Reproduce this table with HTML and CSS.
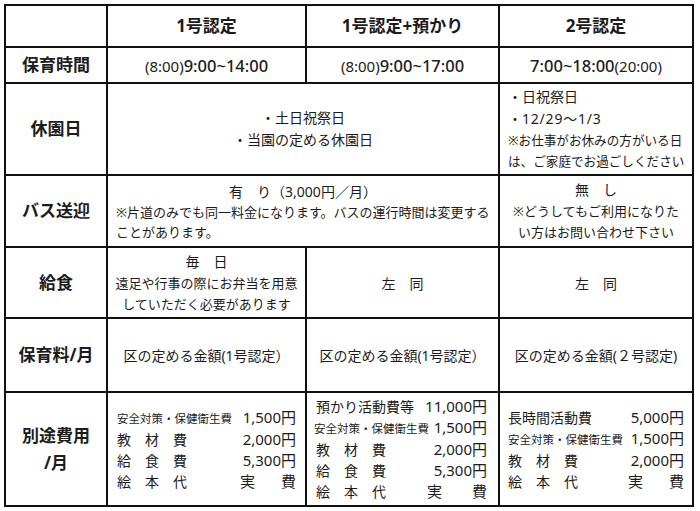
FILE: index.html
```html
<!DOCTYPE html>
<html lang="ja">
<head>
<meta charset="utf-8">
<title>保育料一覧</title>
<link rel="stylesheet" href="styles.css">
</head>
<body>
<table class="fee-table">
  <colgroup>
    <col class="c-label">
    <col class="c-1">
    <col class="c-2">
    <col class="c-3">
  </colgroup>
  <tr class="r-head">
    <td></td>
    <th>1号認定</th>
    <th>1号認定+預かり</th>
    <th>2号認定</th>
  </tr>
  <tr class="r-time">
    <th class="label">保育時間</th>
    <td><span class="t-small">(8:00)</span><span class="t-big">9:00~14:00</span></td>
    <td><span class="t-small">(8:00)</span><span class="t-big">9:00~17:00</span></td>
    <td><span class="t-big">7:00~18:00</span><span class="t-small">(20:00)</span></td>
  </tr>
  <tr class="r-holiday">
    <th class="label">休園日</th>
    <td colspan="2" class="body main lh22">・土日祝祭日<br>・当園の定める休園日</td>
    <td class="body left lh21"><span class="main">・日祝祭日<br>・<span class="date">12/29〜1/3</span></span><br><span class="note-sm">※お仕事がお休みの方がいる日<br>は、ご家庭でお過ごしください</span></td>
  </tr>
  <tr class="r-bus">
    <th class="label">バス送迎</th>
    <td colspan="2" class="body lh21">
      <div class="bus-main main">有　り（3,000円／月）</div>
      <div class="bus-note">※片道のみでも同一料金になります。バスの運行時間は変更する<br>ことがあります。</div>
    </td>
    <td class="body lh21"><span class="main">無　し</span><br>※どうしてもご利用になりた<br>い方はお問い合わせ下さい</td>
  </tr>
  <tr class="r-lunch">
    <th class="label">給食</th>
    <td class="body lh21"><span class="main">毎　日</span><br>遠足や行事の際にお弁当を用意<br>していただく必要があります</td>
    <td class="body main">左　同</td>
    <td class="body main">左　同</td>
  </tr>
  <tr class="r-fee">
    <th class="label">保育料/月</th>
    <td class="amount">区の定める金額(1号認定）</td>
    <td class="amount">区の定める金額(1号認定）</td>
    <td class="amount">区の定める金額(２号認定)</td>
  </tr>
  <tr class="r-extra">
    <th class="label">別途費用<br>/月</th>
    <td class="fees-cell fc-1">
      <div class="fee"><span class="fee-name small">安全対策・保健衛生費</span><span class="fee-val">1,500円</span></div>
      <div class="fee"><span class="fee-name">教　材　費</span><span class="fee-val">2,000円</span></div>
      <div class="fee"><span class="fee-name">給　食　費</span><span class="fee-val">5,300円</span></div>
      <div class="fee"><span class="fee-name">絵　本　代</span><span class="fee-val actual"><span>実</span><span>費</span></span></div>
    </td>
    <td class="fees-cell fc-2">
      <div class="fee indent"><span class="fee-name">預かり活動費等</span><span class="fee-val">11,000円</span></div>
      <div class="fee"><span class="fee-name small">安全対策・保健衛生費</span><span class="fee-val">1,500円</span></div>
      <div class="fee indent"><span class="fee-name">教　材　費</span><span class="fee-val">2,000円</span></div>
      <div class="fee indent"><span class="fee-name">給　食　費</span><span class="fee-val">5,300円</span></div>
      <div class="fee indent"><span class="fee-name">絵　本　代</span><span class="fee-val actual wide"><span>実</span><span>費</span></span></div>
    </td>
    <td class="fees-cell fc-3">
      <div class="fee"><span class="fee-name">長時間活動費</span><span class="fee-val">5,000円</span></div>
      <div class="fee"><span class="fee-name small">安全対策・保健衛生費</span><span class="fee-val">1,500円</span></div>
      <div class="fee"><span class="fee-name">教　材　費</span><span class="fee-val">2,000円</span></div>
      <div class="fee"><span class="fee-name">絵　本　代</span><span class="fee-val actual"><span>実</span><span>費</span></span></div>
    </td>
  </tr>
</table>
</body>
</html>
```

FILE: styles.css
```css
html, body {
  margin: 0;
  padding: 0;
  background: #ffffff;
}

body {
  font-family: "Noto Sans", "Noto Sans CJK JP", sans-serif;
  color: #1c1c1c;
}

.fee-table {
  margin: 4px 0 0 4px;
  border-collapse: collapse;
  table-layout: fixed;
  width: 690px;
}

.c-label { width: 102px; }
.c-1 { width: 199px; }
.c-2 { width: 193px; }
.c-3 { width: 194px; }

.fee-table td,
.fee-table th {
  border: 2px solid #111;
  padding: 0;
  text-align: center;
  vertical-align: middle;
  font-weight: normal;
}

.fee-table th {
  font-size: 17px;
  font-weight: 700;
  line-height: 22px;
}

.r-head { height: 42px; }
.r-time { height: 36px; }
.r-holiday { height: 92px; }
.r-bus { height: 72px; }
.r-lunch { height: 71px; }
.r-fee { height: 74px; }
.r-extra { height: 114px; }

.label {
  font-size: 17px;
}

.r-extra .label {
  line-height: 27px;
}

.t-small {
  font-size: 15px;
}

.t-big {
  font-size: 16.5px;
  font-weight: 500;
}

.body {
  font-size: 13px;
}

.main {
  font-size: 14px;
}

.date {
  letter-spacing: 0.8px;
}

.note-sm {
  font-size: 12.6px;
}

.lh22 { line-height: 22px; }
.lh21 { line-height: 21px; }

.left {
  text-align: left !important;
  padding-left: 8px !important;
}

.bus-note {
  text-align: left;
  padding-left: 8px;
  line-height: 20px;
}

.amount {
  font-size: 14px;
}

.fees-cell {
  line-height: 21px;
}

.fc-1 { padding: 0 9px 0 9px !important; }
.fc-2 { padding: 0 11px 0 7px !important; }
.fc-3 { padding: 0 8px 0 8px !important; }

.fee {
  display: flex;
  justify-content: space-between;
  align-items: baseline;
}

.fee.indent {
  padding-left: 2px;
}

.fee-name {
  font-size: 14px;
}

.fee-name.small {
  font-size: 11.5px;
}

.fee-val {
  font-size: 15px;
}

.fee-val.actual {
  display: flex;
  justify-content: space-between;
  width: 56px;
}

.fee-val.actual.wide {
  width: 60px;
}
```
